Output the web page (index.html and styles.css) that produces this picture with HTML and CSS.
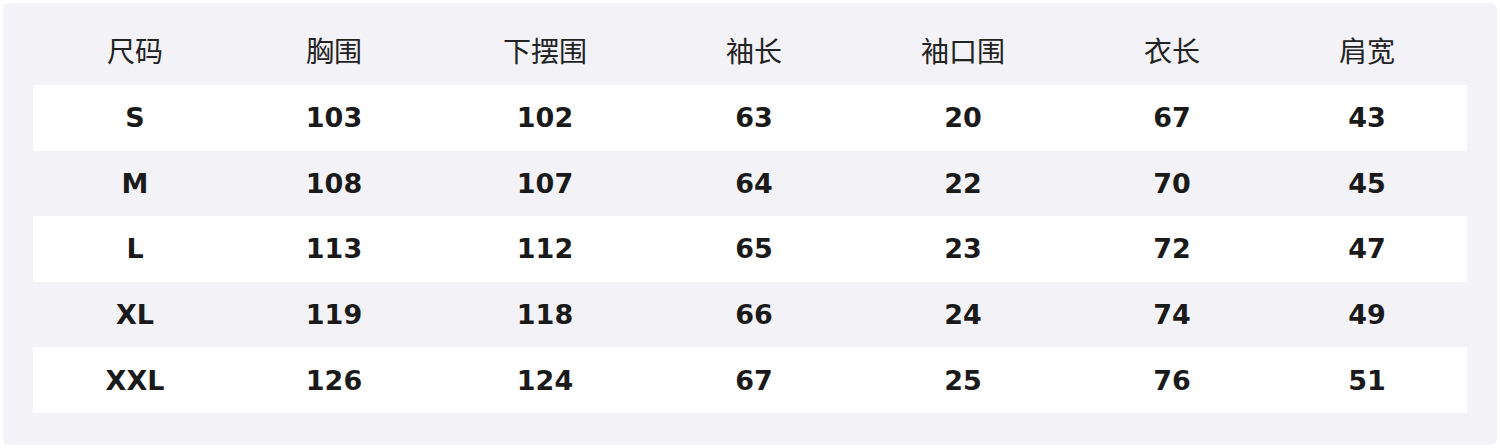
FILE: index.html
```html
<!DOCTYPE html>
<html lang="zh">
<head>
<meta charset="utf-8">
<link rel="stylesheet" href="styles.css">
</head>
<body>
<div class="panel">
  <div class="row head">
    <div>尺码</div><div>胸围</div><div>下摆围</div><div>袖长</div><div>袖口围</div><div>衣长</div><div>肩宽</div>
  </div>
  <div class="row white">
    <div>S</div><div>103</div><div>102</div><div>63</div><div>20</div><div>67</div><div>43</div>
  </div>
  <div class="row">
    <div>M</div><div>108</div><div>107</div><div>64</div><div>22</div><div>70</div><div>45</div>
  </div>
  <div class="row white">
    <div>L</div><div>113</div><div>112</div><div>65</div><div>23</div><div>72</div><div>47</div>
  </div>
  <div class="row">
    <div>XL</div><div>119</div><div>118</div><div>66</div><div>24</div><div>74</div><div>49</div>
  </div>
  <div class="row white">
    <div>XXL</div><div>126</div><div>124</div><div>67</div><div>25</div><div>76</div><div>51</div>
  </div>
</div>
</body>
</html>
```

FILE: styles.css
```css
html, body {
  margin: 0;
  padding: 0;
  background: #ffffff;
}
body {
  width: 1500px;
  height: 448px;
  padding: 3px;
  box-sizing: border-box;
}
.panel {
  height: 442px;
  background: #f3f3f7;
  border-radius: 6px;
  padding: 0 30px 32px 30px;
  box-sizing: border-box;
  display: flex;
  flex-direction: column;
}
.row {
  display: grid;
  grid-template-columns: 204fr 194fr 228fr 190fr 228fr 190fr 200fr;
  height: 65.6px;
  align-items: center;
  justify-items: center;
  font-family: "DejaVu Sans", "Noto Sans CJK SC", sans-serif;
  font-weight: bold;
  font-size: 27px;
  color: #1a1a1a;
}
.row.head {
  height: 82px;
  padding-top: 11px;
  box-sizing: border-box;
  font-family: "Noto Sans CJK SC", sans-serif;
  font-weight: normal;
  font-size: 28px;
  line-height: 1;
  color: #222222;
}
.row.white {
  background: #ffffff;
}
```
